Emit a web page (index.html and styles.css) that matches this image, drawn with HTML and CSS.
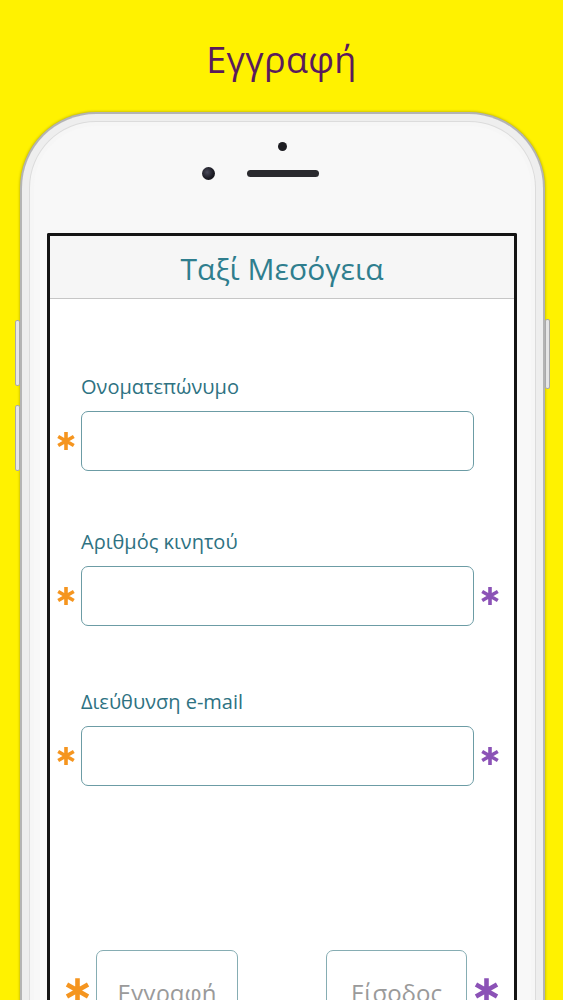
FILE: index.html
```html
<!DOCTYPE html>
<html lang="el">
<head>
<meta charset="utf-8">
<title>Εγγραφή</title>
<link rel="stylesheet" href="styles.css">
</head>
<body>
<div class="page">
  <h1 class="title">Εγγραφή</h1>
  <div class="phone">
    <span class="side-btn side-left side-1"></span>
    <span class="side-btn side-left side-2"></span>
    <span class="side-btn side-right side-3"></span>
    <div class="bezel">
      <span class="sensor"></span>
      <div class="earpiece-row">
        <span class="camera"></span>
        <span class="speaker"></span>
        <span></span>
      </div>
    </div>
    <div class="screen">
      <header class="app-header">Ταξί Μεσόγεια</header>
      <form class="form">
        <div class="field">
          <label class="label">Ονοματεπώνυμο</label>
          <div class="row">
            <svg class="ast ast-orange" viewBox="0 0 20 20"><path d="M10 1V19M2.2 5.5L17.8 14.5M2.2 14.5L17.8 5.5"/></svg>
            <div class="input"></div>
            <span></span>
          </div>
        </div>
        <div class="field field-2">
          <label class="label">Αριθμός κινητού</label>
          <div class="row">
            <svg class="ast ast-orange" viewBox="0 0 20 20"><path d="M10 1V19M2.2 5.5L17.8 14.5M2.2 14.5L17.8 5.5"/></svg>
            <div class="input"></div>
            <svg class="ast ast-purple" viewBox="0 0 20 20"><path d="M10 1V19M2.2 5.5L17.8 14.5M2.2 14.5L17.8 5.5"/></svg>
          </div>
        </div>
        <div class="field field-3">
          <label class="label">Διεύθυνση e-mail</label>
          <div class="row">
            <svg class="ast ast-orange" viewBox="0 0 20 20"><path d="M10 1V19M2.2 5.5L17.8 14.5M2.2 14.5L17.8 5.5"/></svg>
            <div class="input"></div>
            <svg class="ast ast-purple" viewBox="0 0 20 20"><path d="M10 1V19M2.2 5.5L17.8 14.5M2.2 14.5L17.8 5.5"/></svg>
          </div>
        </div>
        <div class="actions">
          <svg class="ast ast-big ast-orange" viewBox="0 0 20 20"><path d="M10 1V19M2.2 5.5L17.8 14.5M2.2 14.5L17.8 5.5"/></svg>
          <button type="button" class="btn">Εγγραφή</button>
          <span></span>
          <button type="button" class="btn">Είσοδος</button>
          <svg class="ast ast-big ast-purple" viewBox="0 0 20 20"><path d="M10 1V19M2.2 5.5L17.8 14.5M2.2 14.5L17.8 5.5"/></svg>
        </div>
      </form>
    </div>
  </div>
</div>
</body>
</html>
```

FILE: styles.css
```css
html, body {
  margin: 0;
  padding: 0;
}

body {
  background: #fff200;
  font-family: "Open Sans", "Noto Sans", "DejaVu Sans", sans-serif;
  height: 1000px;
  overflow: hidden;
}

.page {
  display: flex;
  flex-direction: column;
  height: 1000px;
  overflow: hidden;
}

.title {
  flex-shrink: 0;
  margin: 0;
  height: 112px;
  box-sizing: border-box;
  padding-top: 36px;
  text-align: center;
  font-size: 36px;
  line-height: 48px;
  font-weight: 400;
  color: #5a1b5c;
  letter-spacing: 0.3px;
}

.phone {
  flex-shrink: 0;
  position: relative;
  margin-left: 20px;
  width: 525px;
  height: 960px;
  box-sizing: border-box;
  background: #f8f8f8;
  border: 2px solid #b4b4b4;
  border-bottom: 0;
  border-radius: 76px 76px 0 0;
  box-shadow: 0 0 3px rgba(0, 0, 0, 0.35), inset 0 0 0 7px #eeeeee, inset 0 0 0 8px #dcdcdc, inset 0 0 0 12px #f6f6f6;
}

.side-btn {
  position: absolute;
  width: 3px;
  background: #e6e6e6;
  border: 1px solid #a9a9a9;
  border-radius: 2px;
}

.side-left { left: -7px; }
.side-right { right: -7px; }
.side-1 { top: 206px; height: 64px; }
.side-2 { top: 291px; height: 64px; }
.side-3 { top: 205px; height: 68px; }

.bezel {
  display: flex;
  flex-direction: column;
  align-items: center;
  padding-top: 28px;
  height: 119px;
  box-sizing: border-box;
}

.sensor {
  width: 9px;
  height: 9px;
  border-radius: 50%;
  background: #1d1d22;
}

.earpiece-row {
  display: grid;
  grid-template-columns: 1fr auto 1fr;
  align-items: center;
  width: 100%;
  margin-top: 16px;
  column-gap: 32px;
}

.camera {
  justify-self: end;
  width: 13px;
  height: 13px;
  border-radius: 50%;
  background: radial-gradient(circle at 40% 40%, #4a4a5a 0, #1b1b24 55%, #0c0c12 100%);
}

.speaker {
  width: 72px;
  height: 7px;
  border-radius: 4px;
  background: #2a2a2e;
}

.screen {
  margin-left: 25px;
  width: 470px;
  height: 900px;
  box-sizing: border-box;
  border: 3px solid #141414;
  border-bottom: 0;
  border-radius: 2px 2px 0 0;
  background: #ffffff;
}

.app-header {
  height: 63px;
  box-sizing: border-box;
  background: #f6f6f6;
  border-bottom: 1px solid #c6c6c6;
  display: flex;
  align-items: center;
  justify-content: center;
  font-size: 30px;
  color: #2f7e8e;
  padding-top: 2px;
}

.form {
  display: flex;
  flex-direction: column;
  padding-top: 75px;
}

.field {
  display: flex;
  flex-direction: column;
}

.field-2 { margin-top: 58px; }
.field-3 { margin-top: 63px; }

.label {
  padding-left: 31px;
  font-size: 20px;
  line-height: 26px;
  color: #2e7282;
  margin-bottom: 11px;
}

.row {
  display: grid;
  grid-template-columns: 31px 393px 32px;
  align-items: center;
}

.input {
  height: 60px;
  box-sizing: border-box;
  border: 1.5px solid #6c9ca5;
  border-radius: 7px;
  background: #fff;
}

.ast {
  width: 20px;
  height: 20px;
  justify-self: center;
  fill: none;
  stroke-width: 3.6;
  stroke-linecap: butt;
}

.ast-big {
  width: 27px;
  height: 27px;
  stroke-width: 3.4;
}

.ast-orange { stroke: #f5951f; }
.ast-purple { stroke: #8b52b6; }

.actions {
  margin-top: 164px;
  display: grid;
  grid-template-columns: 26px 142px 76px 141px 26px;
  column-gap: 6px;
  padding-left: 14px;
  align-items: center;
}

.btn {
  height: 80px;
  box-sizing: border-box;
  border: 1.5px solid #86adb3;
  border-radius: 7px;
  background: #fff;
  font-family: "Open Sans", "Noto Sans", "DejaVu Sans", sans-serif;
  font-size: 24px;
  color: #9a9a9a;
  padding: 5px 0 0;
}
```
